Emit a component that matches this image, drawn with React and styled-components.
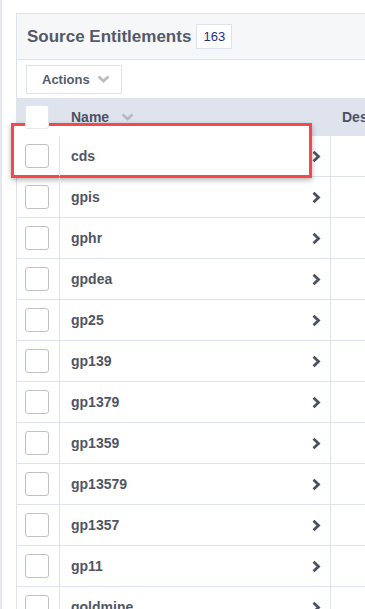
import React from 'react';
import styled, { createGlobalStyle } from 'styled-components';

const GlobalStyle = createGlobalStyle`
  html, body {
    margin: 0;
    padding: 0;
    background: #ffffff;
    overflow: hidden;
  }
  body {
    font-family: "Liberation Sans", Arial, sans-serif;
  }
`;

const names = [
  'cds', 'gpis', 'gphr', 'gpdea', 'gp25', 'gp139', 'gp1379',
  'gp1359', 'gp13579', 'gp1357', 'gp11', 'goldmine',
];

const Page = styled.div`
  border-left: 2px solid #e4e8f0;
  padding: 13px 0 0 14px;
  height: 609px;
  box-sizing: border-box;
`;

const Panel = styled.div`
  width: 640px;
  border-top: 1px solid #dde2ec;
  border-left: 1px solid #dde2ec;
`;

const TitleBar = styled.div`
  display: flex;
  align-items: center;
  gap: 5px;
  height: 45px;
  padding-left: 10px;
  background: #f6f7f9;
  border-bottom: 1px solid #dde2ec;
`;

const Title = styled.h2`
  margin: 0;
  font-size: 17px;
  font-weight: bold;
  color: #535a69;
`;

const Badge = styled.span`
  display: flex;
  align-items: center;
  justify-content: center;
  width: 34px;
  height: 23px;
  border: 1px solid #dde2ec;
  background: #fff;
  font-size: 13px;
  color: #1d2f86;
`;

const Toolbar = styled.div`
  display: flex;
  align-items: center;
  height: 38px;
  padding-left: 9px;
  background: #fff;
`;

const ActionsButton = styled.button`
  display: flex;
  align-items: center;
  gap: 7px;
  width: 96px;
  height: 29px;
  padding: 0 0 0 15px;
  border: 1px solid #dde2ec;
  background: #fff;
  font-family: inherit;
  font-size: 13px;
  font-weight: bold;
  color: #555c6b;
  cursor: pointer;
`;

const Grid = styled.div`
  display: grid;
  grid-template-columns: 43px 271px 1fr;
`;

const HeaderRow = styled(Grid)`
  height: 38px;
  background: #dfe3ee;
  align-items: center;
`;

const Row = styled(Grid)`
  position: relative;
  height: 41px;
  border-bottom: 1px solid #dde2ec;
  box-sizing: border-box;
  ${(p) => p.$highlight && `
    &::before {
      content: '';
      position: absolute;
      left: -6px;
      top: -13px;
      width: 301px;
      height: 55px;
      box-sizing: border-box;
      border: 3px solid #f2494a;
      background: #fff;
      box-shadow: 0 2px 5px rgba(0, 0, 0, 0.3);
      z-index: 1;
    }
  `}
`;

const Cell = styled.div`
  position: relative;
  z-index: 2;
  display: flex;
  align-items: center;
  min-width: 0;
  border-right: ${(p) => (p.$line ? '1px solid #dde2ec' : 'none')};
  padding-left: ${(p) => p.$pad || 0}px;
  padding-right: ${(p) => p.$padRight || 0}px;
`;

const Check = styled.span`
  display: block;
  width: 22px;
  height: 22px;
  border: 1px solid ${(p) => (p.$header ? '#e3e6ec' : '#bfc1c6')};
  border-radius: 3px;
  background: #fff;
`;

const HeadText = styled.span`
  font-size: 14px;
  font-weight: bold;
  color: #4c5266;
  white-space: nowrap;
`;

const NameText = styled.span`
  flex: 1;
  font-size: 14px;
  font-weight: bold;
  color: #4f5565;
`;

const Chevron = () => (
  <svg width="10" height="13" viewBox="0 0 10 13">
    <polyline points="2.5,1.8 7.5,6.5 2.5,11.2" fill="none" stroke="#4a5162" strokeWidth="2.8" />
  </svg>
);

const SortArrow = ({ color = '#b6bac3' }) => (
  <svg width="13" height="8" viewBox="0 0 13 8">
    <polyline points="1.5,1.5 6.5,6 11.5,1.5" fill="none" stroke={color} strokeWidth="2.8" />
  </svg>
);

export default function App() {
  return (
    <Page>
      <GlobalStyle />
      <Panel>
        <TitleBar>
          <Title>Source Entitlements</Title>
          <Badge>163</Badge>
        </TitleBar>
        <Toolbar>
          <ActionsButton>
            Actions
            <SortArrow color="#b9bcc3" />
          </ActionsButton>
        </Toolbar>
        <HeaderRow>
          <Cell $pad={8}>
            <Check $header />
          </Cell>
          <Cell $pad={11} style={{ gap: 12 }}>
            <HeadText>Name</HeadText>
            <SortArrow />
          </Cell>
          <Cell $pad={11}>
            <HeadText>Description</HeadText>
          </Cell>
        </HeaderRow>
        {names.map((n, i) => (
          <Row key={n} $highlight={i === 0}>
            <Cell $line $pad={8}>
              <Check />
            </Cell>
            <Cell $line $pad={11} $padRight={9}>
              <NameText>{n}</NameText>
              <Chevron />
            </Cell>
            <Cell />
          </Row>
        ))}
      </Panel>
    </Page>
  );
}
